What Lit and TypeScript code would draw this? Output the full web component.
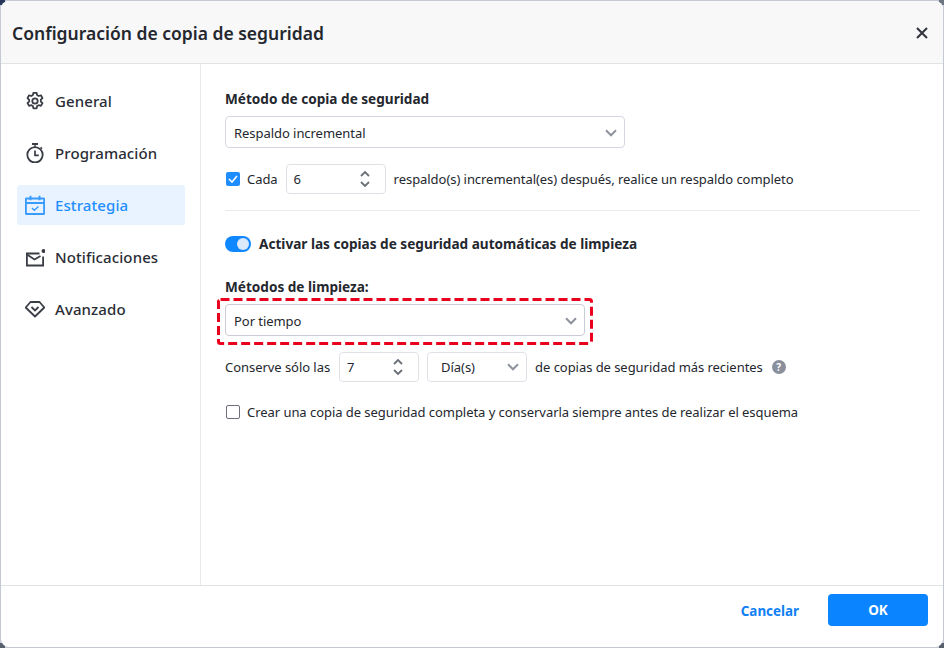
import { LitElement, html, css, svg } from 'lit';
import { customElement } from 'lit/decorators.js';

const chevron = html`<svg width="12" height="8" viewBox="0 0 12 8"><path d="M1 1.300 6 6.300l5-5" fill="none" stroke="#8f939d" stroke-width="2"/></svg>`;

const spin = html`<svg width="10" height="18" viewBox="0 0 10 18">
  <path d="M1 6 5 2 9 6M1 12 5 16 9 12" fill="none" stroke="#6b6f78" stroke-width="1.800"/>
</svg>`;

const icons: Record<string, unknown> = {
  gear: svg`<path d="M8.400 1.800h3.200l.5 2.300 1.500.9 2.300-.7 1.600 2.800-1.700 1.600v1.800l1.700 1.600-1.600 2.800-2.300-.7-1.500.9-.5 2.300H8.400l-.5-2.300-1.500-.9-2.300.7-1.600-2.800 1.700-1.600V8.900L2.500 7.100l1.600-2.800 2.300.7 1.500-.9z" fill="none" stroke="currentColor" stroke-width="1.800" stroke-linejoin="round"/><circle cx="10" cy="10" r="2.700" fill="none" stroke="currentColor" stroke-width="1.800"/>`,
  timer: svg`<path d="M7 1h6" fill="none" stroke="currentColor" stroke-width="1.800"/><path d="M10 1v3" stroke="currentColor" stroke-width="1.400"/><path d="m15.600 4.300 1.400 1.400" stroke="currentColor" stroke-width="1.600"/><circle cx="10" cy="11.800" r="7.700" fill="none" stroke="currentColor" stroke-width="1.800"/><path d="M10 7.500v4.800h3.800" fill="none" stroke="currentColor" stroke-width="1.700"/>`,
  calendar: svg`<path d="M1.500 3.500h17a.6.6 0 0 1 .6.600v14.300a.6.6 0 0 1-.6.600h-17a.6.6 0 0 1-.6-.600V4.100a.6.6 0 0 1 .6-.600zM1 8h18M5.500 .8v4.500M14.500 .8v4.500" fill="none" stroke="currentColor" stroke-width="1.900"/><path d="m7 13 2.300 2.300L13.500 11.500" fill="none" stroke="currentColor" stroke-width="1.500"/>`,
  mail: svg`<path d="M14.500 6.500H1.900v12h16.200V9.500" fill="none" stroke="currentColor" stroke-width="1.800"/><path d="m2 7.500 7.500 5 6-3.500" fill="none" stroke="currentColor" stroke-width="1.800"/><circle cx="18.500" cy="4" r="2" fill="currentColor"/>`,
  gem: svg`<path d="M5.500 3h9l4.800 5.500L10 17.500.7 8.500z" fill="none" stroke="currentColor" stroke-width="1.800" stroke-linejoin="round"/><path d="m6.500 8 3.500 3.500L13.500 8" fill="none" stroke="currentColor" stroke-width="1.800"/>`,
};

const nav = [
  { icon: 'gear', label: 'General' },
  { icon: 'timer', label: 'Programación' },
  { icon: 'calendar', label: 'Estrategia', active: true },
  { icon: 'mail', label: 'Notificaciones' },
  { icon: 'gem', label: 'Avanzado' },
];

@customElement('app-root')
export class AppRoot extends LitElement {
  static styles = css`
    :host {
      display: block;
      width: 944px;
      height: 648px;
      padding: 1px;
      box-sizing: border-box;
      background:
        linear-gradient(#27375a, #27375a) 0 0 / 5px 5px no-repeat,
        linear-gradient(#6d7482, #6d7482) 100% 0 / 5px 5px no-repeat,
        linear-gradient(#59606e, #59606e) 100% 100% / 5px 5px no-repeat,
        linear-gradient(#59606e, #59606e) 0 100% / 5px 5px no-repeat,
        #c5c9d5;
      font-family: 'Noto Sans', sans-serif;
      font-size: 13px;
      letter-spacing: -0.05px;
      color: #24272e;
    }
    .dialog {
      height: 646px;
      background: #fff;
      border-radius: 8px;
      overflow: hidden;
      display: flex;
      flex-direction: column;
    }
    .header {
      flex: none;
      box-sizing: border-box;
      height: 63px;
      background: #f8f8f9;
      border-bottom: 1px solid #e2e3e7;
      display: flex;
      align-items: center;
      justify-content: space-between;
      padding: 1px 15px 0 11px;
    }
    .title { font-size: 17.500px; font-weight: 600; letter-spacing: 0; }
    .body { flex: 1; display: flex; min-height: 0; }
    .side {
      flex: none;
      box-sizing: border-box;
      width: 200px;
      border-right: 1px solid #e8e9ec;
      padding: 17px 15px 0 16px;
      display: flex;
      flex-direction: column;
      gap: 12px;
    }
    .item {
      height: 40px;
      border-radius: 3px;
      display: flex;
      align-items: center;
      gap: 10px;
      padding-left: 8px;
      font-size: 15px;
      font-weight: 500;
      letter-spacing: 0.1px;
      color: #2a2d35;
    }
    .item svg { flex: none; color: #3a3d45; }
    .item.active { background: #e9f3ff; color: #1e8eff; }
    .item.active svg { color: #3a9bff; }
    .main {
      flex: 1;
      position: relative;
      box-sizing: border-box;
      padding: 26px 23px 0 24px;
    }
    .label { font-size: 13.600px; font-weight: 700; line-height: 18px; letter-spacing: 0; }
    .select {
      box-sizing: border-box;
      height: 32px;
      border: 1px solid #d5d8e0;
      border-radius: 4px;
      background: #fff;
      display: flex;
      align-items: center;
      justify-content: space-between;
      padding: 1px 7px 0 8px;
    }
    .w400 { width: 400px; margin-top: 8px; }
    .w360 { width: 360px; margin-top: 8px; border-color: #c9ccd5; }
    .row { display: flex; align-items: center; height: 30px; }
    .num {
      box-sizing: border-box;
      height: 30px;
      border: 1px solid #dfe1e7;
      border-radius: 4px;
      display: flex;
      align-items: center;
      justify-content: space-between;
      padding: 0 15px 0 7px;
    }
    .w-spin6 { width: 100px; margin-left: 8px; }
    .w-spin7 { width: 80px; margin-left: 9px; }
    .w-day { width: 100px; margin-left: 8px; padding: 0 7px 0 13px; }
    .box {
      box-sizing: border-box;
      width: 14px;
      height: 14px;
      flex: none;
      border-radius: 2px;
      display: flex;
      align-items: center;
      justify-content: center;
    }
    .box.on { background: #1e8eff; }
    .box.off { border: 1.500px solid #6d7079; background: #fff; }
    .gap7 { margin-left: 7px; }
    .gap8 { margin-left: 8px; }
    .r1 { margin-top: 16px; margin-left: 1px; }
    .hr { height: 1px; background: #e8e9ec; margin-top: 16px; }
    .r2 { margin-top: 18px; gap: 8px; }
    .toggle {
      position: relative;
      width: 26px;
      height: 16px;
      border-radius: 8px;
      background: #0f87ff;
    }
    .knob {
      position: absolute;
      top: 2px;
      right: 2px;
      width: 12px;
      height: 12px;
      border-radius: 50%;
      background: #dbe9fb;
    }
    .l2 { margin-top: 19px; }
    .dash {
      position: absolute;
      left: 16px;
      top: 234px;
      pointer-events: none;
    }
    .r3 { margin-top: 16px; }
    .r4 { margin-top: 15px; margin-left: 1px; }
    .help {
      width: 14px;
      height: 14px;
      border-radius: 50%;
      background: #8a8f9c;
      color: #fff;
      font-size: 10px;
      font-weight: 700;
      display: flex;
      align-items: center;
      justify-content: center;
      margin-left: 9px;
    }
    .footer {
      flex: none;
      box-sizing: border-box;
      height: 62px;
      border-top: 1px solid #e2e3e7;
      display: flex;
      align-items: flex-start;
      justify-content: flex-end;
      padding: 8px 15px 0 0;
      gap: 29px;
    }
    .cancel { color: #1080f5; font-size: 13.400px; font-weight: 700; line-height: 34px; letter-spacing: 0; }
    .ok {
      width: 100px;
      height: 32px;
      background: #0a84ff;
      color: #fff;
      border-radius: 4px;
      font-size: 13.500px;
      font-weight: 700;
      display: flex;
      align-items: center;
      justify-content: center;
    }
  `;

  render() {
    return html`
      <div class="dialog">
        <div class="header">
          <div class="title">Configuración de copia de seguridad</div>
          <svg width="12" height="12" viewBox="0 0 12 12"><path d="m1 1 10 10M11 1 1 11" stroke="#33363d" stroke-width="2.100"/></svg>
        </div>
        <div class="body">
          <div class="side">
            ${nav.map(
              (n) => html`<div class="item ${n.active ? 'active' : ''}">
                <svg width="20" height="20" viewBox="0 0 20 20">${icons[n.icon]}</svg>
                <span>${n.label}</span>
              </div>`,
            )}
          </div>
          <div class="main">
            <div class="label">Método de copia de seguridad</div>
            <div class="select w400"><span>Respaldo incremental</span>${chevron}</div>
            <div class="row r1">
              <span class="box on"><svg width="10" height="8" viewBox="0 0 10 8"><path d="m1 4 3 3 5-6" fill="none" stroke="#fff" stroke-width="1.600"/></svg></span>
              <span class="gap7">Cada</span>
              <div class="num w-spin6"><span>6</span>${spin}</div>
              <span class="gap8">respaldo(s) incremental(es) después, realice un respaldo completo</span>
            </div>
            <div class="hr"></div>
            <div class="row r2">
              <div class="toggle"><div class="knob"></div></div>
              <span class="label">Activar las copias de seguridad automáticas de limpieza</span>
            </div>
            <div class="label l2">Métodos de limpieza:</div>
            <div class="select w360"><span>Por tiempo</span>${chevron}</div>
            <svg class="dash" width="376" height="47" viewBox="0 0 376 47">
              <rect x="1.500" y="1.500" width="373" height="44" rx="2" fill="none" stroke="#e8001c" stroke-width="3" stroke-dasharray="9 4"/>
            </svg>
            <div class="row r3">
              <span>Conserve sólo las</span>
              <div class="num w-spin7"><span>7</span>${spin}</div>
              <div class="num w-day"><span>Día(s)</span>${chevron}</div>
              <span class="gap8">de copias de seguridad más recientes</span>
              <span class="help">?</span>
            </div>
            <div class="row r4">
              <span class="box off"></span>
              <span class="gap7">Crear una copia de seguridad completa y conservarla siempre antes de realizar el esquema</span>
            </div>
          </div>
        </div>
        <div class="footer">
          <span class="cancel">Cancelar</span>
          <span class="ok">OK</span>
        </div>
      </div>
    `;
  }
}
